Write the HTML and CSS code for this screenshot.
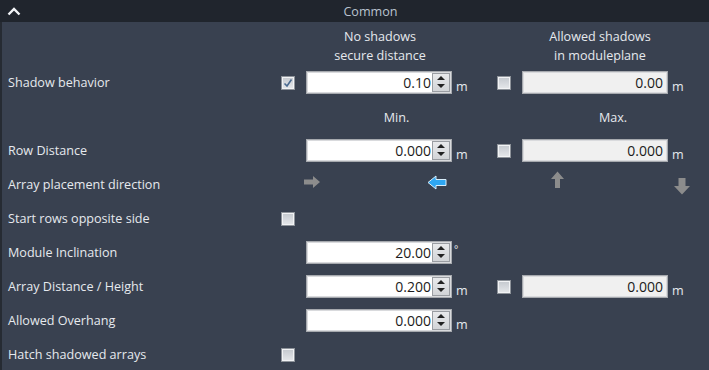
FILE: index.html
```html
<!DOCTYPE html>
<html lang="en">
<head>
    <meta charset="UTF-8">
    <title>Common</title>
    <link rel="stylesheet" href="styles.css">
</head>
<body>
    <div class="panel">
        <div class="panel-header">
            <svg class="chevron" width="14" height="9" viewBox="0 0 14 9"><path d="M1.5 7.5 L7 2 L12.5 7.5" fill="none" stroke="#f2f4f7" stroke-width="2.4"/></svg>
            <span class="title">Common</span>
        </div>

        <div class="panel-body">
            <div class="row head-row">
                <span></span><span></span>
                <div class="col-title">No shadows<br>secure distance</div>
                <span></span><span></span>
                <div class="col-title right">Allowed shadows<br>in moduleplane</div>
            </div>

            <div class="row">
                <label>Shadow behavior</label>
                <span class="check checked"><svg width="10" height="10" viewBox="0 0 10 10"><path d="M1.5 5.5 L4 8 L8.5 1.5" fill="none" stroke="#4a6a90" stroke-width="1.6"/></svg></span>
                <div class="spin"><span class="val">0.10</span><span class="arrows"><i class="up"></i><i class="down"></i></span></div>
                <span class="unit">m</span>
                <span class="check"></span>
                <div class="spin disabled"><span class="val">0.00</span></div>
                <span class="unit">m</span>
            </div>

            <div class="row">
                <span></span><span></span>
                <div class="sub-title">Min.</div>
                <div class="sub-title right">Max.</div>
            </div>

            <div class="row">
                <label>Row Distance</label>
                <span></span>
                <div class="spin"><span class="val">0.000</span><span class="arrows"><i class="up"></i><i class="down"></i></span></div>
                <span class="unit">m</span>
                <span class="check"></span>
                <div class="spin disabled"><span class="val">0.000</span></div>
                <span class="unit">m</span>
            </div>

            <div class="row">
                <label>Array placement direction</label>
                <span></span>
                <div class="directions">
                    <svg class="dir right-dir" width="17" height="12" viewBox="0 0 17 12"><path d="M0 3.5 H9 V0 L16 6 L9 12 V8.5 H0 Z" fill="#8c8c8c"/></svg>
                    <svg class="dir left-dir" width="20" height="15" viewBox="0 0 20 15"><path d="M19 4.5 H9 V1 L1 7.5 L9 14 V10.5 H19 Z" fill="#2ea6f2" stroke="#d8eefc" stroke-width="1"/></svg>
                    <svg class="dir up-dir" width="13" height="17" viewBox="0 0 13 17"><path d="M4 17 V8 H0 L6.5 0.5 L13 8 H9 V17 Z" fill="#8c8c8c"/></svg>
                    <svg class="dir down-dir" width="16" height="17" viewBox="0 0 16 17"><path d="M4.5 0 V8 H0 L8 16.5 L16 8 H11.5 V0 Z" fill="#8c8c8c"/></svg>
                </div>
            </div>

            <div class="row">
                <label>Start rows opposite side</label>
                <span class="check"></span>
            </div>

            <div class="row">
                <label>Module Inclination</label>
                <span></span>
                <div class="spin"><span class="val">20.00</span><span class="arrows"><i class="up"></i><i class="down"></i></span></div>
                <span class="unit deg">&deg;</span>
            </div>

            <div class="row">
                <label>Array Distance / Height</label>
                <span></span>
                <div class="spin"><span class="val">0.200</span><span class="arrows"><i class="up"></i><i class="down"></i></span></div>
                <span class="unit">m</span>
                <span class="check"></span>
                <div class="spin disabled"><span class="val">0.000</span></div>
                <span class="unit">m</span>
            </div>

            <div class="row">
                <label>Allowed Overhang</label>
                <span></span>
                <div class="spin"><span class="val">0.000</span><span class="arrows"><i class="up"></i><i class="down"></i></span></div>
                <span class="unit">m</span>
            </div>

            <div class="row">
                <label>Hatch shadowed arrays</label>
                <span class="check"></span>
            </div>
        </div>
    </div>
</body>
</html>
```

FILE: styles.css
```css
body {
    margin: 0;
    background-color: #394150;
    font-family: "Open Sans", "Noto Sans", sans-serif;
    font-size: 12.6px;
    color: #e6e9ee;
}
.panel {
    width: 709px;
    height: 370px;
    overflow: hidden;
}
.panel-header {
    height: 22px;
    background-color: #20252d;
    display: flex;
    align-items: center;
    position: relative;
}
.chevron {
    margin-left: 7px;
}
.title {
    position: absolute;
    left: 0;
    right: 0;
    top: 3px;
    text-align: center;
    color: #b9c3cf;
    font-size: 12.6px;
    padding-left: 32px;
    pointer-events: none;
}
.panel-body {
    border-left: 2px solid #262b33;
    padding-left: 6px;
    height: 348px;
}
.row {
    display: grid;
    grid-template-columns: 273px 25px 146px 45px 25px 146px 1fr;
    height: 34px;
    align-items: center;
}
.head-row {
    height: 43px;
    align-items: end;
    padding-bottom: 0;
    box-sizing: border-box;
}
.col-title {
    text-align: center;
    line-height: 19px;
    margin-left: 2px;
}
.col-title.right {
    margin-left: 10px;
}
.sub-title {
    grid-column: 3 / span 2;
    text-align: center;
    padding-right: 10px;
    padding-top: 2px;
}
.sub-title.right {
    grid-column: 5 / span 3;
    padding-right: 0;
    padding-left: 16px;
    margin-right: -4px;
}
.check {
    width: 14px;
    height: 14px;
    box-sizing: border-box;
    border: 1px solid #8e939a;
    background: linear-gradient(#c4c8ce, #e6e8eb);
    box-shadow: inset 0 0 0 1px #f2f3f5;
    display: flex;
    align-items: center;
    justify-content: center;
    margin-top: 2px;
}
.spin {
    height: 23px;
    box-sizing: border-box;
    border: 1px solid #a6a9ae;
    box-shadow: inset 0 0 0 1px #d9dadd;
    background-color: #fff;
    display: flex;
    align-items: center;
    justify-content: flex-end;
    padding-right: 1px;
    color: #1b1b1b;
    font-size: 14px;
}
.spin.disabled {
    background-color: #f0f0f0;
    padding-right: 3px;
}
.val {
    padding-right: 1px;
}
.arrows {
    width: 18px;
    height: 19px;
    box-sizing: border-box;
    border: 1px solid #9a9da2;
    background: linear-gradient(#e8e9eb, #d2d4d7);
    display: flex;
    flex-direction: column;
    align-items: center;
    justify-content: space-around;
    padding: 1px 0;
}
.arrows i {
    width: 0;
    height: 0;
    border-left: 4px solid transparent;
    border-right: 4px solid transparent;
}
.arrows .up {
    border-bottom: 4px solid #222;
}
.arrows .down {
    border-top: 4px solid #222;
}
.arrows .up + .down {
    margin-top: 1px;
}
.unit {
    padding-left: 4px;
    padding-top: 8px;
    font-size: 12.6px;
}
.unit.deg {
    padding-top: 0;
    padding-bottom: 6px;
    padding-left: 2px;
    font-size: 10px;
}
.directions {
    grid-column: 3 / span 5;
    display: flex;
    align-items: center;
    height: 34px;
}
.dir {
    display: block;
}
.right-dir {
    margin-left: -2px;
    margin-top: -4px;
}
.left-dir {
    margin-left: 106px;
    margin-top: -4px;
}
.up-dir {
    margin-left: 104px;
    margin-top: -10px;
}
.down-dir {
    margin-left: 110px;
    margin-top: 4px;
}
```
